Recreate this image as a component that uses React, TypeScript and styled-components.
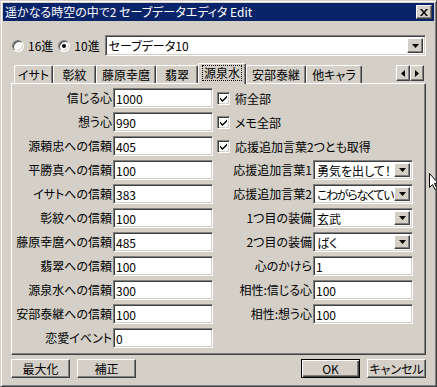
import styled, { createGlobalStyle, css } from 'styled-components';

const GlobalStyle = createGlobalStyle`
  html, body {
    margin: 0;
    padding: 0;
    background: #d4d0c8;
  }
  body {
    font-family: "Noto Sans CJK JP", "Noto Sans", sans-serif;
    font-size: 12px;
    color: #000;
    font-feature-settings: "palt";
  }
  * {
    box-sizing: border-box;
  }
`;

const raised = css`
  border: 1px solid;
  border-color: #fff #404040 #404040 #fff;
  box-shadow: inset -1px -1px #808080;
`;

const sunken = css`
  border: 1px solid;
  border-color: #808080 #fff #fff #808080;
  box-shadow: inset 1px 1px #404040, inset -1px -1px #d4d0c8;
`;

type RightItem =
  | { kind: 'check'; text: string }
  | { kind: 'combo'; label: string; value: string; tight?: boolean }
  | { kind: 'text'; label: string; value: string };

const leftRows = [
  ['信じる心', '1000'],
  ['想う心', '990'],
  ['源頼忠への信頼', '405'],
  ['平勝真への信頼', '100'],
  ['イサトへの信頼', '383'],
  ['彰紋への信頼', '100'],
  ['藤原幸麿への信頼', '485'],
  ['翡翠への信頼', '100'],
  ['源泉水への信頼', '300'],
  ['安部泰継への信頼', '100'],
  ['恋愛イベント', '0'],
];

const rightRows: RightItem[] = [
  { kind: 'check', text: '術全部' },
  { kind: 'check', text: 'メモ全部' },
  { kind: 'check', text: '応援追加言葉2つとも取得' },
  { kind: 'combo', label: '応援追加言葉1', value: '勇気を出して！' },
  { kind: 'combo', label: '応援追加言葉2', value: 'こわがらなくてい', tight: true },
  { kind: 'combo', label: '1つ目の装備', value: '玄武' },
  { kind: 'combo', label: '2つ目の装備', value: 'ばく' },
  { kind: 'text', label: '心のかけら', value: '1' },
  { kind: 'text', label: '相性:信じる心', value: '100' },
  { kind: 'text', label: '相性:想う心', value: '100' },
];

const tabs = [
  { name: 'イサト', w: 39 },
  { name: '彰紋', w: 43 },
  { name: '藤原幸麿', w: 60 },
  { name: '翡翠', w: 42 },
  { name: '源泉水', w: 48, active: true },
  { name: '安部泰継', w: 60 },
  { name: '他キャラ', w: 56 },
];

function DownArrow() {
  return (
    <svg width="7" height="4" viewBox="0 0 7 4">
      <polygon points="0,0 7,0 3.5,4" fill="#000" />
    </svg>
  );
}

function DropDown({ value, big, tight }: { value: string; big?: boolean; tight?: boolean }) {
  return (
    <Combo $big={big}>
      <ComboText $tight={tight}>{value}</ComboText>
      <DropButton>
        <DownArrow />
      </DropButton>
    </Combo>
  );
}

export default function App() {
  return (
    <>
      <GlobalStyle />
      <Window>
        <TitleBar>
          <TitleText>遥かなる時空の中で2 セーブデータエディタ Edit</TitleText>
          <CloseButton>
            <svg width="8" height="7" viewBox="0 0 8 7">
              <path d="M0 0h2l2 2.5L6 0h2L5 3.5 8 7H6L4 4.5 2 7H0l3-3.5z" fill="#000" />
            </svg>
          </CloseButton>
        </TitleBar>
        <Body>
          <ModeRow>
            <Radio />
            <RadioLabel>16進</RadioLabel>
            <Radio $checked />
            <RadioLabel>10進</RadioLabel>
            <DropDown value="セーブデータ10" big />
          </ModeRow>

          <TabStrip>
            {tabs.map((t) => (
              <Tab key={t.name} $w={t.w} $active={t.active}>
                {t.active ? <FocusText>{t.name}</FocusText> : t.name}
              </Tab>
            ))}
            <ScrollArrows>
              <ArrowButton>
                <svg width="4" height="7" viewBox="0 0 4 7">
                  <polygon points="4,0 4,7 0,3.5" fill="#000" />
                </svg>
              </ArrowButton>
              <ArrowButton>
                <svg width="4" height="7" viewBox="0 0 4 7">
                  <polygon points="0,0 0,7 4,3.5" fill="#000" />
                </svg>
              </ArrowButton>
            </ScrollArrows>
          </TabStrip>

          <Panel>
            <FieldGrid>
              {leftRows.map(([label, value], i) => {
                const r = rightRows[i];
                return (
                  <Row key={label}>
                    <FieldLabel>{label}</FieldLabel>
                    <TextField readOnly value={value} />
                    {r && r.kind === 'check' && (
                      <CheckRow>
                        <CheckBox>
                          <svg width="7" height="7" viewBox="0 0 7 7">
                            <path d="M0 2.5l2.5 2.5L7 0.5v2L2.5 7 0 4.5z" fill="#000" />
                          </svg>
                        </CheckBox>
                        {r.text}
                      </CheckRow>
                    )}
                    {r && r.kind === 'combo' && (
                      <>
                        <FieldLabel>{r.label}</FieldLabel>
                        <DropDown value={r.value} tight={r.tight} />
                      </>
                    )}
                    {r && r.kind === 'text' && (
                      <>
                        <FieldLabel>{r.label}</FieldLabel>
                        <TextField readOnly value={r.value} />
                      </>
                    )}
                  </Row>
                );
              })}
            </FieldGrid>
          </Panel>

          <ButtonRow>
            <PushButton>最大化</PushButton>
            <PushButton>補正</PushButton>
            <Spacer />
            <PushButton $default>OK</PushButton>
            <PushButton>キャンセル</PushButton>
          </ButtonRow>
        </Body>

        <Cursor width="10" height="17" viewBox="0 0 10 17">
          <path d="M0.5 0.5v14l3-3 2.5 5 2-1-2.5-5h4z" fill="#fff" stroke="#000" />
        </Cursor>
      </Window>
    </>
  );
}

const Window = styled.div`
  position: relative;
  width: 437px;
  height: 387px;
  overflow: hidden;
  background: #d4d0c8;
  border: 1px solid;
  border-color: #d4d0c8 #404040 #404040 #d4d0c8;
  box-shadow: inset 1px 1px #fff, inset -1px -1px #808080;
  padding: 2px;
`;

const TitleBar = styled.div`
  height: 18px;
  background: #0a246a;
  color: #fff;
  display: flex;
  align-items: center;
  justify-content: space-between;
  padding: 0 2px 0 2px;
`;

const TitleText = styled.span`
  font-size: 12px;
  line-height: 18px;
  white-space: nowrap;
`;

const CloseButton = styled.div`
  width: 16px;
  height: 14px;
  background: #d4d0c8;
  ${raised};
  display: flex;
  align-items: center;
  justify-content: center;
`;

const Body = styled.div`
  padding: 14px 8px 0 8px;
`;

const ModeRow = styled.div`
  display: flex;
  align-items: center;
  height: 21px;
  padding-left: 1px;
`;

const Radio = styled.span<{ $checked?: boolean }>`
  position: relative;
  width: 12px;
  height: 12px;
  flex: none;
  border-radius: 50%;
  background: #fff;
  border: 1px solid;
  border-color: #808080 #fff #fff #808080;
  box-shadow: inset 1px 1px #404040, inset -1px -1px #d4d0c8;
  &::after {
    content: '';
    display: ${({ $checked }) => ($checked ? 'block' : 'none')};
    position: absolute;
    left: 3px;
    top: 3px;
    width: 4px;
    height: 4px;
    border-radius: 50%;
    background: #000;
  }
`;

const RadioLabel = styled.span`
  margin: 0 5px 0 4px;
  line-height: 16px;
`;

const Combo = styled.div<{ $big?: boolean }>`
  display: flex;
  align-items: center;
  height: ${({ $big }) => ($big ? '21px' : '20px')};
  ${({ $big }) => ($big ? 'flex: 1;' : 'width: 100px;')}
  background: #fff;
  ${sunken};
  padding: 2px;
  min-width: 0;
`;

const ComboText = styled.span<{ $tight?: boolean }>`
  flex: 1;
  min-width: 0;
  overflow: hidden;
  white-space: nowrap;
  padding-left: 1px;
  line-height: 15px;
  letter-spacing: ${({ $tight }) => ($tight ? '-1.3px' : '0')};
`;

const DropButton = styled.span`
  width: 16px;
  height: 100%;
  flex: none;
  background: #d4d0c8;
  ${raised};
  display: flex;
  align-items: center;
  justify-content: center;
`;

const TabStrip = styled.div`
  display: flex;
  align-items: flex-end;
  height: 20px;
  margin-top: 7px;
  padding-left: 3px;
`;

const Tab = styled.div<{ $w: number; $active?: boolean }>`
  width: ${({ $w }) => $w}px;
  height: ${({ $active }) => ($active ? '21px' : '18px')};
  margin-bottom: ${({ $active }) => ($active ? '-1px' : '0')};
  position: relative;
  z-index: ${({ $active }) => ($active ? 1 : 0)};
  flex: none;
  display: flex;
  align-items: ${({ $active }) => ($active ? 'flex-start' : 'center')};
  padding-top: ${({ $active }) => ($active ? '2px' : '0')};
  justify-content: center;
  background: #d4d0c8;
  white-space: nowrap;
  border-top: 1px solid #fff;
  border-left: 1px solid #fff;
  border-right: 1px solid #404040;
  border-radius: 2px 2px 0 0;
  box-shadow: inset -1px 0 #808080;
  line-height: 14px;
`;

const FocusText = styled.span`
  outline: 1px dotted #000;
  outline-offset: 0;
  padding: 0 1px;
`;

const ScrollArrows = styled.div`
  display: flex;
  align-self: flex-start;
  margin: 2px 2px 0 auto;
`;

const ArrowButton = styled.div`
  width: 14px;
  height: 16px;
  background: #d4d0c8;
  ${raised};
  display: flex;
  align-items: center;
  justify-content: center;
`;

const Panel = styled.div`
  height: 272px;
  border: 1px solid;
  border-color: #fff #404040 #404040 #fff;
  box-shadow: inset -1px -1px #808080;
  padding: 4px 0 0 1px;
`;

const FieldGrid = styled.div`
  display: grid;
  grid-template-columns: 100px 100px 100px 100px;
  grid-auto-rows: 20px;
  row-gap: 4px;
`;

const Row = styled.div`
  display: contents;
`;

const FieldLabel = styled.span`
  text-align: right;
  white-space: nowrap;
  line-height: 20px;
  padding-right: 1px;
`;

const TextField = styled.input`
  width: 100px;
  height: 20px;
  margin: 0;
  padding: 0 0 0 2px;
  background: #fff;
  ${sunken};
  font: inherit;
  font-size: 12px;
  color: #000;
  outline: none;
`;

const CheckRow = styled.div`
  grid-column: span 2;
  display: flex;
  align-items: center;
  gap: 5px;
  padding-left: 4px;
  white-space: nowrap;
`;

const CheckBox = styled.span`
  width: 13px;
  height: 13px;
  flex: none;
  background: #fff;
  ${sunken};
  display: flex;
  align-items: center;
  justify-content: center;
`;

const ButtonRow = styled.div`
  display: flex;
  gap: 7px;
  margin-top: 4px;
`;

const Spacer = styled.div`
  flex: 1;
`;

const PushButton = styled.div<{ $default?: boolean }>`
  width: 59px;
  height: 19px;
  display: flex;
  align-items: center;
  justify-content: center;
  background: #d4d0c8;
  white-space: nowrap;
  line-height: 15px;
  ${({ $default }) =>
    $default
      ? css`
          border: 1px solid #000;
          box-shadow: inset 1px 1px #fff, inset -1px -1px #404040, inset -2px -2px #808080;
        `
      : raised};
`;

const Cursor = styled.svg`
  position: absolute;
  left: 428px;
  top: 172px;
`;
